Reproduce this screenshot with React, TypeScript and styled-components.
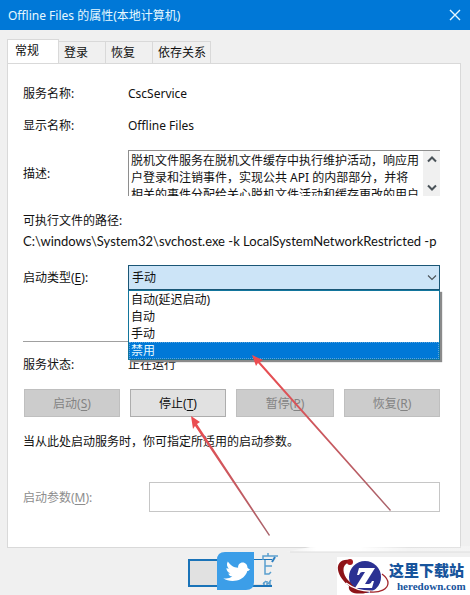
import React from "react";
import styled, { createGlobalStyle, css } from "styled-components";

const Global = createGlobalStyle`
  * { box-sizing: border-box; }
  html, body { margin: 0; background: #f0f0f0; }
  body, button, input, select, textarea {
    font-family: "Noto Sans", "Noto Sans CJK SC", sans-serif;
    font-size: 12px;
    line-height: 17px;
    color: #111;
  }
  u { text-underline-offset: 2px; }
`;

const Dialog = styled.main`
  position: relative;
  display: flex;
  flex-direction: column;
  min-height: 100vh;
  overflow: hidden;
`;

const TitleBar = styled.header`
  display: flex;
  align-items: center;
  justify-content: space-between;
  height: 30px;
  padding: 0 9px 0 8px;
  background: #0078d7;
  color: #e6f8ff;
`;

const Title = styled.h1`
  margin: 0;
  font-size: 12px;
  font-weight: 400;
`;

const CloseButton = styled.button`
  display: flex;
  padding: 0;
  border: 0;
  background: none;
  color: #e6f8ff;
`;

const TabBar = styled.div`
  display: flex;
  align-items: flex-end;
  height: 34px;
  padding: 0 7px;
  margin-bottom: -1px;
`;

const Tab = styled.button<{ $active?: boolean }>`
  height: 23px;
  padding: 0 5px;
  border: 1px solid #d9d9d9;
  border-left-width: 0;
  background: #f0f0f0;
  text-align: left;
  white-space: nowrap;
  width: 47px;
  &:last-child { width: 58px; }
  ${(p) =>
    p.$active &&
    css`
      width: 52px;
      height: 25px;
      padding: 0 7px 3px;
      border-left-width: 1px;
      border-bottom-color: #fff;
      background: #fff;
    `}
`;

const Panel = styled.section`
  display: flex;
  flex-direction: column;
  margin: 0 9px 0 7px;
  padding: 21px 20px 35px 15px;
  border: 1px solid #d9d9d9;
  background: #fff;
`;

const Row = styled.div<{ $gap?: number; $dim?: boolean }>`
  display: grid;
  grid-template-columns: 105px minmax(0, 1fr);
  align-items: center;
  margin-bottom: ${(p) => p.$gap ?? 0}px;
  color: ${(p) => (p.$dim ? "#8d8d8d" : "#111")};
`;

const ParamRow = styled(Row)`
  grid-template-columns: 126px minmax(0, 1fr);
`;

const Description = styled.div`
  display: flex;
  height: 46px;
  border: 1px solid #8e8e8e;
  border-width: 1px 0 0 1px;
`;

const DescriptionText = styled.textarea`
  flex: 1;
  min-width: 0;
  padding: 1px 4px 0 2px;
  border: 0;
  outline: 0;
  resize: none;
  overflow: hidden;
  background: #fff;
`;

const ScrollBar = styled.div`
  display: flex;
  flex-direction: column;
  justify-content: space-between;
  width: 17px;
  background: #f0f0f0;
`;

const ScrollButton = styled.button`
  display: flex;
  align-items: center;
  justify-content: center;
  height: 17px;
  padding: 0;
  border: 0;
  background: none;
`;

const Line = styled.p<{ $gap?: number }>`
  margin: 0 0 ${(p) => p.$gap ?? 0}px;
  line-height: 21px;
  white-space: nowrap;
`;

const PathLine = styled(Line)`
  font-family: Lato, "Noto Sans", sans-serif;
  font-size: 13px;
`;

const Combo = styled.div`
  position: relative;
`;

const Select = styled.select`
  display: block;
  width: 100%;
  height: 25px;
  padding: 0 3px;
  appearance: none;
  border: 1px solid #1a5676;
  border-radius: 0;
  background: #cce4f7;
`;

const SelectArrow = styled.span`
  position: absolute;
  top: 9px;
  right: 3px;
  display: flex;
  pointer-events: none;
`;

const Options = styled.ul`
  position: absolute;
  z-index: 2;
  top: 25px;
  left: 0;
  right: 0;
  margin: 0;
  padding: 0;
  list-style: none;
  border: 1px solid #12759c;
  background: #fff;
  box-shadow: 2px 2px 1px #8a8a8a;
`;

const Option = styled.li<{ $selected?: boolean }>`
  height: 17px;
  padding: 0 2px;
  ${(p) =>
    p.$selected &&
    css`
      background: #0078d7;
      color: #e6f8ff;
      outline: 1px dotted #5ba5dc;
      outline-offset: -1px;
    `}
`;

const Divider = styled.hr`
  width: 100%;
  margin: 0 0 14px;
  border: 0;
  border-top: 1px solid #a0a0a0;
`;

const Actions = styled.div`
  display: grid;
  grid-template-columns: 96fr 96fr 98fr 96fr;
  gap: 10px;
  margin: 0 0 14px 1px;
`;

const ActionButton = styled.button`
  height: 28px;
  padding: 0;
  border: 1px solid #adadad;
  background: #e1e1e1;
  &:disabled {
    border-color: #bfbfbf;
    background: #ccc;
    color: #838383;
  }
`;

const ParamInput = styled.input`
  width: 100%;
  height: 30px;
  padding: 0 4px;
  border: 1px solid #c6c6c6;
  background: #fff;
`;

const Footer = styled.footer`
  display: flex;
  justify-content: center;
  padding: 11px 0 0;
`;

const ConfirmButton = styled.button`
  width: 94px;
  height: 28px;
  border: 2px solid #1a73b8;
  background: #e1e1e1;
`;

const Overlay = styled.svg`
  position: absolute;
  z-index: 3;
  left: 0;
  top: 0;
  pointer-events: none;
`;

const Bird = styled.span`
  position: absolute;
  z-index: 4;
  left: 217px;
  top: 552px;
  display: flex;
`;

const SiteBadge = styled.a`
  position: absolute;
  z-index: 4;
  right: 0;
  bottom: 0;
  display: flex;
  align-items: center;
  width: 133px;
  height: 38px;
  background: #fff;
  text-decoration: none;
  svg { flex-shrink: 0; }
`;

const SiteText = styled.span`
  display: flex;
  flex-direction: column;
  color: #17549c;
  white-space: nowrap;
`;

const SiteName = styled.strong`
  font: 900 15px/20px "Noto Sans CJK SC", sans-serif;
`;

const SiteHost = styled.strong`
  padding-left: 8px;
  font: 700 11px/12px "Liberation Serif", serif;
`;

const Chevron = ({ up, thin }: { up?: boolean; thin?: boolean }) => (
  <svg width="10" height="7" viewBox="0 0 10 7" fill="none" aria-hidden="true">
    <path d={up ? "M1 5.5 5 1.5 9 5.5" : "M1 1.5 5 5.5 9 1.5"} stroke="#4a5258" strokeWidth={thin ? 1.1 : 2} />
  </svg>
);

const tabs = ["常规", "登录", "恢复", "依存关系"];
const startupTypes = ["自动(延迟启动)", "自动", "手动", "禁用"];
const actions = [
  { label: "启动", mnemonic: "S" },
  { label: "停止", mnemonic: "T", enabled: true },
  { label: "暂停", mnemonic: "P" },
  { label: "恢复", mnemonic: "R" },
];

export default function App() {
  return (
    <>
      <Global />
      <Dialog>
        <TitleBar>
          <Title>Offline Files 的属性(本地计算机)</Title>
          <CloseButton aria-label="关闭">
            <svg width="12" height="12" viewBox="0 0 12 12" stroke="currentColor" strokeWidth="1.4">
              <path d="M1 1 11 11M11 1 1 11" />
            </svg>
          </CloseButton>
        </TitleBar>
        <TabBar role="tablist">
          {tabs.map((t, i) => (
            <Tab key={t} role="tab" aria-selected={i === 0} $active={i === 0}>{t}</Tab>
          ))}
        </TabBar>
        <Panel>
          <Row $gap={15}><span>服务名称:</span><span>CscService</span></Row>
          <Row $gap={16}><span>显示名称:</span><span>Offline Files</span></Row>
          <Row $gap={14}>
            <label htmlFor="description">描述:</label>
            <Description>
              <DescriptionText
                id="description"
                readOnly
                value="脱机文件服务在脱机文件缓存中执行维护活动，响应用户登录和注销事件，实现公共 API 的内部部分，并将相关的事件分配给关心脱机文件活动和缓存更改的用户"
              />
              <ScrollBar>
                <ScrollButton aria-label="向上滚动"><Chevron up /></ScrollButton>
                <ScrollButton aria-label="向下滚动"><Chevron /></ScrollButton>
              </ScrollBar>
            </Description>
          </Row>
          <Line>可执行文件的路径:</Line>
          <PathLine $gap={13}>C:\windows\System32\svchost.exe -k LocalSystemNetworkRestricted -p</PathLine>
          <Row $gap={51}>
            <label htmlFor="startup">启动类型(<u>E</u>):</label>
            <Combo>
              <Select id="startup" defaultValue="手动">
                {startupTypes.map((t) => <option key={t}>{t}</option>)}
              </Select>
              <SelectArrow><Chevron thin /></SelectArrow>
              <Options role="listbox" aria-label="启动类型">
                {startupTypes.map((t, i) => (
                  <Option key={t} role="option" aria-selected={i === 3} $selected={i === 3}>{t}</Option>
                ))}
              </Options>
            </Combo>
          </Row>
          <Divider />
          <Row $gap={16}><span>服务状态:</span><span>正在运行</span></Row>
          <Actions>
            {actions.map((a) => (
              <ActionButton key={a.label} disabled={!a.enabled}>{a.label}(<u>{a.mnemonic}</u>)</ActionButton>
            ))}
          </Actions>
          <Line $gap={30}>当从此处启动服务时，你可指定所适用的启动参数。</Line>
          <ParamRow $dim>
            <label htmlFor="params">启动参数(<u>M</u>):</label>
            <ParamInput id="params" disabled />
          </ParamRow>
        </Panel>
        <Footer><ConfirmButton aria-label="确定" /></Footer>
        <Overlay width="470" height="595" viewBox="0 0 470 595" fill="none" aria-hidden="true">
          <defs>
            <linearGradient id="tailA" gradientUnits="userSpaceOnUse" x1="252" y1="355" x2="391" y2="511">
              <stop offset="0" stopColor="#ee4c50" /><stop offset="1" stopColor="#a8646c" />
            </linearGradient>
            <linearGradient id="tailB" gradientUnits="userSpaceOnUse" x1="191" y1="416" x2="270" y2="536">
              <stop offset="0" stopColor="#ee4c50" /><stop offset="1" stopColor="#a8646c" />
            </linearGradient>
            <linearGradient id="sheen" gradientUnits="userSpaceOnUse" x1="285" y1="0" x2="410" y2="0">
              <stop offset="0" stopColor="#fff" stopOpacity="0" />
              <stop offset="0.25" stopColor="#fff" />
              <stop offset="0.6" stopColor="#fff" />
              <stop offset="1" stopColor="#fff" stopOpacity="0.25" />
            </linearGradient>
          </defs>
          <path d="M285 552 315 546H470V552Z" fill="url(#sheen)" />
          <path d="M290 552H470" stroke="#dedede" />
          <path d="M254 560H272V557H284V588H272V584H254Z" fill="#f0f0f0" />
          <path d="M252 355 263 360 260 362 391 510 390 511 258 363 256 366Z" fill="url(#tailA)" />
          <path d="M191 416 200 422 197 424 270 535 269 536 195 426 193 429Z" fill="url(#tailB)" />
        </Overlay>
        <Bird>
          <svg width="64" height="38" viewBox="0 0 64 38" aria-hidden="true">
            <path d="M8 0H37V30Q37 38 29 38H0V8Q0 0 8 0Z" fill="#3c9ee8" />
            <path d="M33 17.500c-1-.5-1.800-1-2.500-1.700 0-3-2-5.300-4.800-5.300-3 0-4.800 2.300-4.600 5.200-4.600 0-7.600-2.600-10.300-6.200-1.500 2.700-.9 5.200 1 7.200-.9 0-1.700-.3-2.400-.7 0 2.700 1.500 4.500 3.900 5.300-.7.200-1.300.2-2 .1.700 1.800 2 2.900 4 3.200-2.500 1.800-5.500 2.200-9 1.700 4.500 3.200 12 3.700 17.500.7 4-2.200 6-5.500 6.500-8 1.200 0 2-.6 2.700-1.500Z" fill="#fff" />
            <g fill="none" stroke="#5a9fce" strokeWidth="1.500">
              <path d="M51 1V4M46 8V4H61M48 8V22H52L54 20M48 14H55M47 30V33M50 29V33M53 30V33M46 32L49 29M51 32L54 28" />
              <path d="M58 5 55 10" strokeWidth="2" stroke="#2e7fc0" />
            </g>
          </svg>
        </Bird>
        <SiteBadge href="#">
          <svg width="52" height="38" viewBox="0 0 52 38" aria-hidden="true">
            <circle cx="28" cy="20" r="16" fill="#2b3192" />
            <path d="M12 3C4 2 0 7 1 13 2 19 7 25 12 29 11 33 14 36 20 36.500 26 37 31 36 35 33 24 35 17 31 13 25 7 20 4 11 9 7 10 6 11 6 13 6Z" fill="#8d1418" />
            <path d="M9 26C17 32 27 35 38 34" stroke="#fff" strokeWidth="1.500" fill="none" />
            <path d="M33 35C43 36 51 32 51 26 51 23 49 20 45 17" stroke="#a3262b" strokeWidth="1.300" fill="none" />
            <circle cx="13" cy="5" r="3" fill="#a5171c" />
            <path d="M22 11H38L28 27H32Q34 27 35 24H37L35 31H18L28 15H25Q23 15 22 18H20Z" fill="#fff" />
          </svg>
          <SiteText><SiteName>这里下载站</SiteName><SiteHost>heredown.com</SiteHost></SiteText>
        </SiteBadge>
      </Dialog>
    </>
  );
}
